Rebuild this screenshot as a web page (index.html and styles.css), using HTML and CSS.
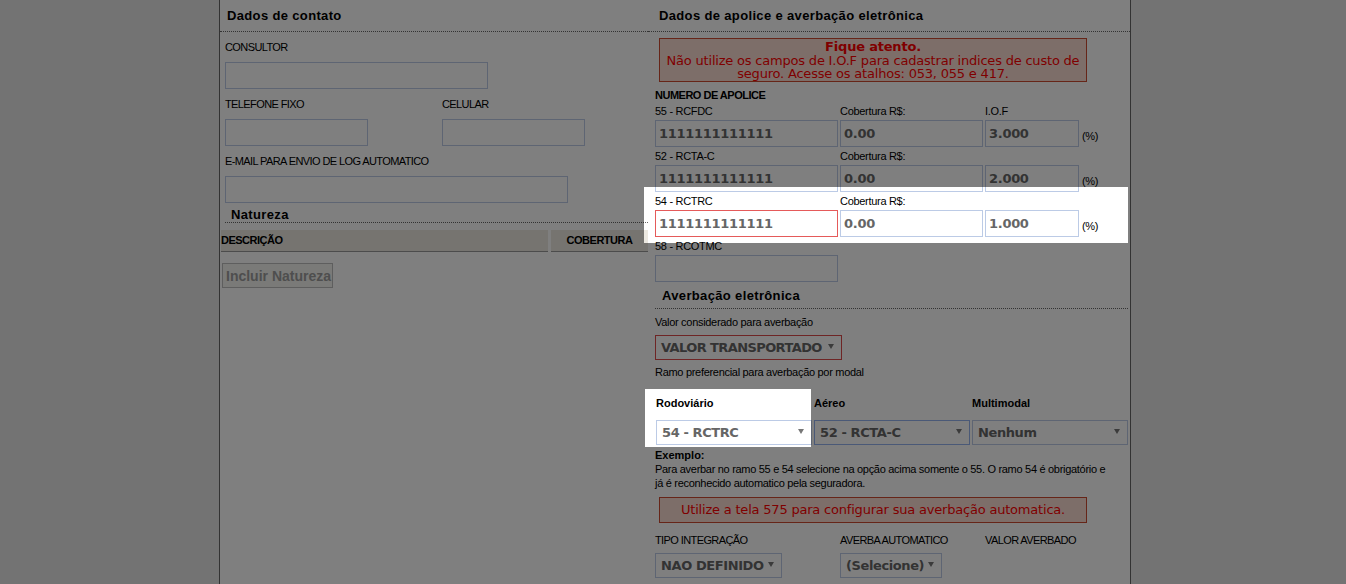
FILE: index.html
```html
<!DOCTYPE html>
<html lang="pt-BR">
<head>
    <meta charset="UTF-8">
    <title>Dados de contato e apolice</title>
    <link rel="stylesheet" href="styles.css">
</head>
<body>
    <div class="page">
        <div class="col col-left">
            <h2 class="sec-title">Dados de contato</h2>
            <div class="contact">
                <label class="lbl caps">CONSULTOR</label>
                <input class="txt w-consultor" type="text">
                <div class="pair">
                    <div class="field">
                        <label class="lbl caps">TELEFONE FIXO</label>
                        <input class="txt w-phone" type="text">
                    </div>
                    <div class="field">
                        <label class="lbl caps">CELULAR</label>
                        <input class="txt w-phone" type="text">
                    </div>
                </div>
                <label class="lbl caps">E-MAIL PARA ENVIO DE LOG AUTOMATICO</label>
                <input class="txt w-email" type="text">
            </div>
            <h3 class="sub-title nat">Natureza</h3>
            <div class="thead">
                <div class="th th-desc">DESCRIÇÃO</div>
                <div class="th th-cob">COBERTURA</div>
            </div>
            <button class="btn" type="button">Incluir Natureza</button>
        </div>

        <div class="col col-right">
            <h2 class="sec-title">Dados de apolice e averbação eletrônica</h2>
            <div class="right-body">
                <div class="alert">
                    <b>Fique atento.</b>
                    Não utilize os campos de I.O.F para cadastrar indices de custo de<br>
                    seguro. Acesse os atalhos: 053, 055 e 417.
                </div>

                <div class="lbl lbl-b caps policy-title">NUMERO DE APOLICE</div>
                <div class="policy">
                    <label class="lbl">55 - RCFDC</label>
                    <label class="lbl">Cobertura R$:</label>
                    <label class="lbl">I.O.F</label>
                    <span></span>
                    <input class="txt" type="text" value="1111111111111">
                    <input class="txt" type="text" value="0.00">
                    <input class="txt" type="text" value="3.000">
                    <span class="lbl pct">(%)</span>

                    <label class="lbl">52 - RCTA-C</label>
                    <label class="lbl">Cobertura R$:</label>
                    <span></span>
                    <span></span>
                    <input class="txt" type="text" value="1111111111111">
                    <input class="txt" type="text" value="0.00">
                    <input class="txt" type="text" value="2.000">
                    <span class="lbl pct">(%)</span>

                    <label class="lbl">54 - RCTRC</label>
                    <label class="lbl">Cobertura R$:</label>
                    <span></span>
                    <span></span>
                    <input class="txt txt-error" type="text" value="1111111111111">
                    <input class="txt" type="text" value="0.00">
                    <input class="txt" type="text" value="1.000">
                    <span class="lbl pct">(%)</span>

                    <label class="lbl">58 - RCOTMC</label>
                    <span></span>
                    <span></span>
                    <span></span>
                    <input class="txt" type="text">
                </div>

                <h3 class="sub-title av">Averbação eletrônica</h3>
                <div class="lbl mt6">Valor considerado para averbação</div>
                <div class="select sel-valor"><span>VALOR TRANSPORTADO</span><i class="arrow"></i></div>
                <div class="lbl mt5">Ramo preferencial para averbação por modal</div>

                <div class="modal">
                    <div class="lbl lbl-b">Rodoviário</div>
                    <div class="lbl lbl-b">Aéreo</div>
                    <div class="lbl lbl-b">Multimodal</div>
                    <div class="select"><span>54 - RCTRC</span><i class="arrow"></i></div>
                    <div class="select sel-focus"><span>52 - RCTA-C</span><i class="arrow"></i></div>
                    <div class="select"><span>Nenhum</span><i class="arrow"></i></div>
                </div>

                <div class="lbl lbl-b mt3">Exemplo:</div>
                <p class="lbl example">Para averbar no ramo 55 e 54 selecione na opção acima somente o 55. O ramo 54 é obrigatório e<br>já é reconhecido automatico pela seguradora.</p>

                <div class="alert alert-one">Utilize a tela 575 para configurar sua averbação automatica.</div>

                <div class="integr">
                    <div class="lbl caps">TIPO INTEGRAÇÃO</div>
                    <div class="lbl caps">AVERBA AUTOMATICO</div>
                    <div class="lbl caps">VALOR AVERBADO</div>
                    <div class="select sel-tipo"><span>NAO DEFINIDO</span><i class="arrow"></i></div>
                    <div class="select sel-auto"><span>(Selecione)</span><i class="arrow"></i></div>
                </div>
            </div>
        </div>
    </div>

    <!-- escurece a tela, deixando so os dois trechos em destaque -->
    <svg class="shade" width="1346" height="584" viewBox="0 0 1346 584">
        <path fill-rule="evenodd" d="M0 0H1346V584H0Z M644 187H1128V243H644Z M645 389H811V447H645Z"/>
    </svg>
</body>
</html>
```

FILE: styles.css
```css
*{box-sizing:border-box;}
html,body{margin:0;padding:0;}
body{
    background:#e6e6e6;
    font-family:"Liberation Sans",Arial,sans-serif;
    font-size:11px;
    color:#000;
    height:584px;
    overflow:hidden;
}
.page{
    margin-left:219px;
    width:912px;
    height:584px;
    background:#fff;
    border-left:1px solid #666;
    border-right:1px solid #666;
    display:flex;
}
.col-left{width:428px;}
.col-right{width:482px;}

.sec-title{
    margin:0;
    height:32px;
    padding-left:7px;
    border-bottom:1px dotted #666;
    font:bold 13px "Liberation Sans",Arial,sans-serif;
    line-height:32px;
    letter-spacing:.35px;
}
.col-right .sec-title{padding-left:11px;}

/* textos pequenos */
.lbl{
    display:block;
    font-size:11px;
    line-height:14px;
    letter-spacing:-.3px;
}
.caps{letter-spacing:-.6px;}
.lbl-b{font-weight:bold;letter-spacing:0;}
.lbl-b.caps{letter-spacing:-.5px;}
.mt3{margin-top:3px;}
.mt5{margin-top:5px;}
.mt6{margin-top:6px;}

.txt{
    display:block;
    width:100%;
    height:27px;
    margin:0;
    padding:1px 3px 0;
    border:1px solid #bccbe6;
    background:#fff;
    font:bold 13px "DejaVu Sans",Verdana,sans-serif;
    letter-spacing:-.3px;
    color:#666;
    outline:none;
}
.txt-error{border-color:#e55a5a;}

/* contato */
.contact{padding-left:5px;}
.contact .lbl{margin:8px 0;}
.w-consultor{width:263px;}
.w-phone{width:143px;}
.w-email{width:343px;}
.pair{
    display:grid;
    grid-template-columns:217px 143px;
}

.sub-title{
    margin:0;
    border-bottom:1px dotted #666;
    font:bold 13px "Liberation Sans",Arial,sans-serif;
    letter-spacing:.35px;
}
.nat{
    margin-left:5px;
    padding:4px 0 0 6px;
    height:20px;
    line-height:15px;
}
.av{
    padding-left:7px;
    height:27px;
    line-height:27px;
}

.thead{
    display:flex;
    gap:3px;
    margin:7px 0 0 1px;
}
.th{
    height:22px;
    line-height:21px;
    background:#ece8e0;
    border-bottom:1px solid #999;
    font-weight:bold;
    letter-spacing:-.5px;
}
.th-desc{width:327px;}
.th-cob{width:97px;text-align:center;}

.btn{
    display:block;
    margin:11px 0 0 2px;
    width:111px;
    height:25px;
    padding:0 0 0 3px;
    border:1px solid #bdbdbd;
    background:#f4f4f0;
    font:bold 14px "Liberation Sans",Arial,sans-serif;
    color:#9d9d9d;
    text-align:left;
    white-space:nowrap;
    overflow:hidden;
}

/* apolice */
.right-body{padding:0 2px 0 7px;}
.alert{
    margin:6px 0 0 4px;
    width:428px;
    padding-top:1px;
    border:1px solid #cc4a30;
    background:#fbdcd3;
    color:#f00;
    text-align:center;
    font:13px "DejaVu Sans",Verdana,sans-serif;
    line-height:13.5px;
    letter-spacing:-.2px;
}
.alert b{display:block;}
.alert-one{
    margin-top:7px;
    height:26px;
    padding-top:0;
    line-height:24px;
}
.policy-title{margin-top:6px;}
.policy{
    display:grid;
    grid-template-columns:183px 143px 94px auto;
    grid-auto-rows:18px 27px;
    column-gap:2px;
}
.policy .lbl{line-height:18px;}
.policy .pct{
    align-self:end;
    line-height:14px;
    padding:0 0 4px 1px;
}

.select{
    display:flex;
    height:25px;
    padding-left:5px;
    border:1px solid #bccbe6;
    background:#fff;
    font:bold 13px "DejaVu Sans",Verdana,sans-serif;
    line-height:24px;
    letter-spacing:-.4px;
    color:#666;
    white-space:nowrap;
}
.arrow{
    margin:8px 7px 0 auto;
    width:0;
    height:0;
    border-left:3px solid transparent;
    border-right:3px solid transparent;
    border-top:5px solid #777;
}
.sel-valor{
    margin-top:6px;
    width:187px;
    border-color:#dd4a4a;
    letter-spacing:-.6px;
}
.sel-focus{border-color:#94b2ee;}

.modal{
    display:grid;
    grid-template-columns:156px 156px 156px;
    column-gap:2px;
    row-gap:10px;
    margin:17px 0 0 1px;
}
.example{
    margin:0;
    white-space:nowrap;
}

.integr{
    display:grid;
    grid-template-columns:183px 143px 94px;
    column-gap:2px;
    row-gap:6px;
    margin-top:10px;
    align-items:start;
}
.sel-tipo{width:127px;}
.sel-auto{width:102px;}

.shade{
    position:fixed;
    left:0;
    top:0;
    fill:rgba(0,0,0,.5);
    pointer-events:none;
}
```
